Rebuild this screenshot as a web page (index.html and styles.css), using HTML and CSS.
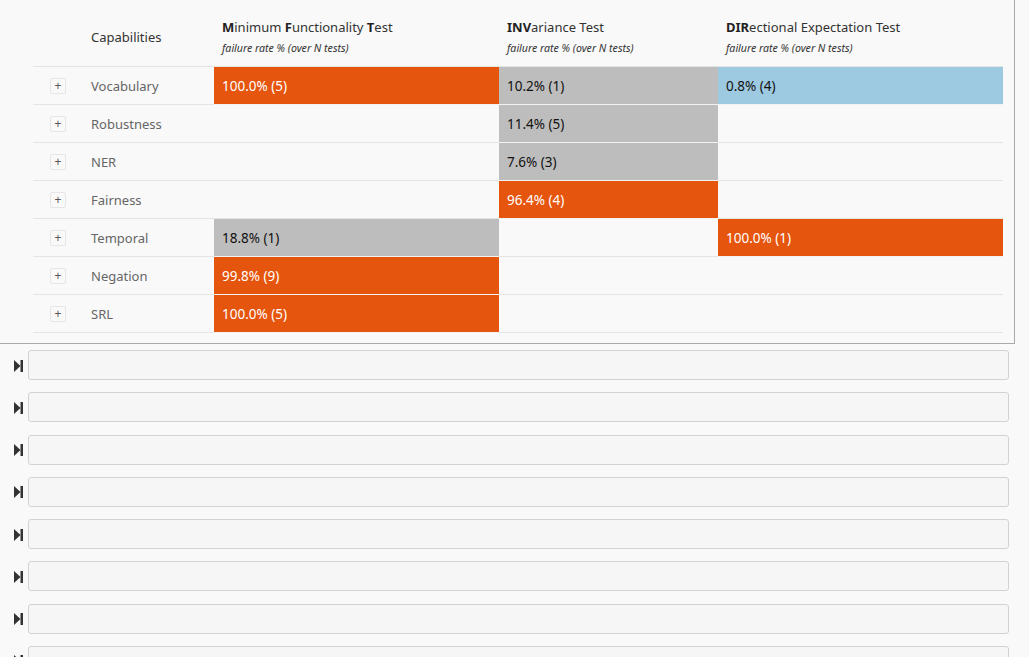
FILE: index.html
```html
<!DOCTYPE html>
<html lang="en">
<head>
<meta charset="UTF-8">
<meta name="viewport" content="width=device-width, initial-scale=1.0">
<title>Test summary</title>
<link rel="stylesheet" href="styles.css">
</head>
<body>
    <div class="summary">
        <table class="matrix">
            <colgroup>
                <col class="col-toggle">
                <col class="col-name">
                <col class="col-mft">
                <col class="col-inv">
                <col class="col-dir">
            </colgroup>
            <thead>
                <tr>
                    <th></th>
                    <th class="cap-head">Capabilities</th>
                    <th><div class="test-name"><b>M</b>inimum <b>F</b>unctionality <b>T</b>est</div><div class="test-sub">failure rate % (over N tests)</div></th>
                    <th><div class="test-name"><b>INV</b>ariance Test</div><div class="test-sub">failure rate % (over N tests)</div></th>
                    <th><div class="test-name"><b>DIR</b>ectional Expectation Test</div><div class="test-sub">failure rate % (over N tests)</div></th>
                </tr>
            </thead>
            <tbody>
                <tr>
                    <td class="toggle"><span class="plus">+</span></td>
                    <td class="name">Vocabulary</td>
                    <td class="high">100.0% (5)</td>
                    <td class="mid">10.2% (1)</td>
                    <td class="low">0.8% (4)</td>
                </tr>
                <tr>
                    <td class="toggle"><span class="plus">+</span></td>
                    <td class="name">Robustness</td>
                    <td></td>
                    <td class="mid">11.4% (5)</td>
                    <td></td>
                </tr>
                <tr>
                    <td class="toggle"><span class="plus">+</span></td>
                    <td class="name">NER</td>
                    <td></td>
                    <td class="mid">7.6% (3)</td>
                    <td></td>
                </tr>
                <tr>
                    <td class="toggle"><span class="plus">+</span></td>
                    <td class="name">Fairness</td>
                    <td></td>
                    <td class="high">96.4% (4)</td>
                    <td></td>
                </tr>
                <tr>
                    <td class="toggle"><span class="plus">+</span></td>
                    <td class="name">Temporal</td>
                    <td class="mid">18.8% (1)</td>
                    <td></td>
                    <td class="high">100.0% (1)</td>
                </tr>
                <tr>
                    <td class="toggle"><span class="plus">+</span></td>
                    <td class="name">Negation</td>
                    <td class="high">99.8% (9)</td>
                    <td></td>
                    <td></td>
                </tr>
                <tr>
                    <td class="toggle"><span class="plus">+</span></td>
                    <td class="name">SRL</td>
                    <td class="high">100.0% (5)</td>
                    <td></td>
                    <td></td>
                </tr>
            </tbody>
        </table>
    </div>

    <div class="details">
        <div class="detail"><svg class="skip" viewBox="0 0 9 12"><path d="M0 0L6.5 6L0 12Z"/><rect x="6.5" y="0" width="2.5" height="12"/></svg><div class="detail-box"></div></div>
        <div class="detail"><svg class="skip" viewBox="0 0 9 12"><path d="M0 0L6.5 6L0 12Z"/><rect x="6.5" y="0" width="2.5" height="12"/></svg><div class="detail-box"></div></div>
        <div class="detail"><svg class="skip" viewBox="0 0 9 12"><path d="M0 0L6.5 6L0 12Z"/><rect x="6.5" y="0" width="2.5" height="12"/></svg><div class="detail-box"></div></div>
        <div class="detail"><svg class="skip" viewBox="0 0 9 12"><path d="M0 0L6.5 6L0 12Z"/><rect x="6.5" y="0" width="2.5" height="12"/></svg><div class="detail-box"></div></div>
        <div class="detail"><svg class="skip" viewBox="0 0 9 12"><path d="M0 0L6.5 6L0 12Z"/><rect x="6.5" y="0" width="2.5" height="12"/></svg><div class="detail-box"></div></div>
        <div class="detail"><svg class="skip" viewBox="0 0 9 12"><path d="M0 0L6.5 6L0 12Z"/><rect x="6.5" y="0" width="2.5" height="12"/></svg><div class="detail-box"></div></div>
        <div class="detail"><svg class="skip" viewBox="0 0 9 12"><path d="M0 0L6.5 6L0 12Z"/><rect x="6.5" y="0" width="2.5" height="12"/></svg><div class="detail-box"></div></div>
        <div class="detail"><svg class="skip" viewBox="0 0 9 12"><path d="M0 0L6.5 6L0 12Z"/><rect x="6.5" y="0" width="2.5" height="12"/></svg><div class="detail-box"></div></div>
    </div>
</body>
</html>
```

FILE: styles.css
```css
html, body {
    height: 657px;
    overflow: hidden;
}
body {
    margin: 0;
    font-family: "Noto Sans", sans-serif;
    font-size: 13px;
    color: #212529;
    background-color: #f9f9f9;
}
.summary {
    width: 1015px;
    height: 344px;
    box-sizing: border-box;
    padding-left: 33px;
    padding-right: 11px;
    border-right: 1px solid #aaa;
    border-bottom: 1px solid #aaa;
}
.matrix {
    width: 970px;
    table-layout: fixed;
    border-collapse: separate;
    border-spacing: 0;
}
.col-toggle { width: 50px; }
.col-name { width: 131px; }
.col-mft { width: 285px; }
.col-inv { width: 219px; }
.col-dir { width: 285px; }
.matrix th {
    height: 67px;
    box-sizing: border-box;
    padding: 8px 8px 0;
    font-weight: normal;
    text-align: left;
    vertical-align: middle;
    border-bottom: 1px solid #e4e4e4;
}
.matrix td {
    height: 38px;
    box-sizing: border-box;
    padding: 0 8px;
    border-bottom: 1px solid #e4e4e4;
}
.cap-head {
    color: #333;
}
.test-name {
    color: #333;
    white-space: nowrap;
}
.test-name b {
    color: #222;
    font-weight: 700;
}
.test-sub {
    margin-top: 5px;
    margin-bottom: 2px;
    font-size: 10.6px;
    font-style: italic;
    color: #333;
    white-space: nowrap;
}
.toggle {
    padding-left: 17px !important;
}
.plus {
    display: block;
    width: 16px;
    height: 16px;
    margin-top: 1px;
    box-sizing: border-box;
    border: 1px solid #e6e6e6;
    border-radius: 2px;
    font-size: 12px;
    line-height: 13px;
    text-align: center;
    color: #555;
}
.name {
    color: #666;
}
.matrix .high {
    background-color: #e6550d;
    color: #fff;
    font-size: 13.5px;
    border-bottom-color: #f2f2f2;
}
.matrix .mid {
    background-color: #bdbdbd;
    color: #111;
    font-size: 13.5px;
    border-bottom-color: #f2f2f2;
}
.matrix .low {
    background-color: #9ecae1;
    color: #111;
    font-size: 13.5px;
    border-bottom-color: #f2f2f2;
}
.details {
    display: flex;
    flex-direction: column;
    gap: 12.29px;
    padding: 6px 20px 0 13.5px;
}
.detail {
    display: flex;
    align-items: center;
    gap: 5.5px;
    flex-shrink: 0;
}
.skip {
    width: 9px;
    height: 12px;
    margin-top: 1px;
    fill: #333;
    flex-shrink: 0;
}
.detail-box {
    flex: 1;
    height: 30px;
    box-sizing: border-box;
    border: 1px solid #d2d2d2;
    border-radius: 3px;
    background-color: #f6f6f6;
}
```
